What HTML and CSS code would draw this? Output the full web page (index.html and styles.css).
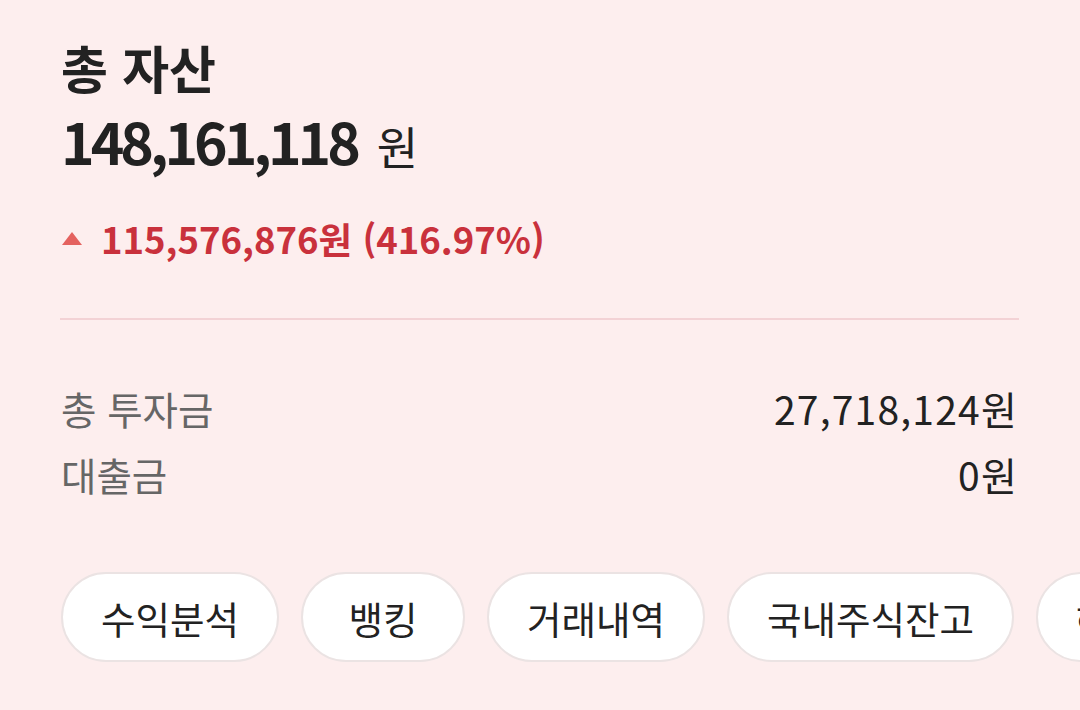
FILE: index.html
```html
<!DOCTYPE html>
<html lang="ko">
<head>
<meta charset="utf-8">
<link rel="stylesheet" href="styles.css">
</head>
<body>
<main class="card">
  <h1 class="title">총 자산</h1>
  <div class="total"><span class="total-num">148,161,118</span><span class="total-unit">원</span></div>
  <div class="change">
    <span class="tri"></span>
    <span class="change-text">115,576,876원 (416.97%)</span>
  </div>
  <hr class="divider">
  <dl class="rows">
    <div class="row"><dt>총 투자금</dt><dd>27,718,124원</dd></div>
    <div class="row"><dt>대출금</dt><dd>0원</dd></div>
  </dl>
  <nav class="chips">
    <button class="chip">수익분석</button>
    <button class="chip">뱅킹</button>
    <button class="chip">거래내역</button>
    <button class="chip">국내주식잔고</button>
    <button class="chip">해외주식잔고</button>
  </nav>
</main>
</body>
</html>
```

FILE: styles.css
```css
html, body {
  margin: 0;
  padding: 0;
  background: #fdeeee;
  overflow: hidden;
}
body {
  width: 1080px;
  height: 710px;
  font-family: "Noto Sans CJK KR", "Noto Sans", sans-serif;
  color: #222;
}
.card {
  padding: 30px 0 0 61px;
}
.title {
  margin: 0;
  font-size: 51px;
  font-weight: 700;
  line-height: 74px;
  height: 74px;
  color: #222;
}
.total {
  display: flex;
  align-items: baseline;
  gap: 20px;
  margin-top: 6px;
  height: 60px;
  line-height: 60px;
}
.total-num {
  font-size: 57px;
  font-weight: 700;
  letter-spacing: -4px;
}
.total-unit {
  font-size: 45px;
  font-weight: 400;
}
.change {
  display: flex;
  align-items: center;
  gap: 19px;
  margin-top: 42px;
  height: 52px;
}
.tri {
  flex: none;
  width: 0;
  height: 0;
  margin-left: 1px;
  border-left: 10px solid transparent;
  border-right: 10px solid transparent;
  border-bottom: 13px solid #e4625f;
}
.change-text {
  font-size: 36.5px;
  font-weight: 700;
  color: #c9313c;
}
.divider {
  width: 959px;
  height: 0;
  margin: 54px 0 0 -1px;
  border: 0;
  border-top: 2px solid #f3d2d5;
}
.rows {
  margin: 55px 0 0 0;
  width: 957px;
  display: flex;
  flex-direction: column;
}
.row {
  display: flex;
  justify-content: space-between;
  align-items: center;
  height: 66px;
}
.row dt {
  font-size: 38.5px;
  color: #666;
}
.row dd {
  margin: 0;
  font-size: 39px;
  letter-spacing: 1.2px;
  color: #222;
}
.chips {
  margin-top: 65px;
  display: flex;
  gap: 22px;
  white-space: nowrap;
}
.chip {
  flex: none;
  height: 90px;
  min-width: 164px;
  padding: 0 38px;
  border-radius: 45px;
  background: #fff;
  border: 2px solid #ebe3e3;
  font-family: inherit;
  font-size: 37.5px;
  color: #222;
}
```
